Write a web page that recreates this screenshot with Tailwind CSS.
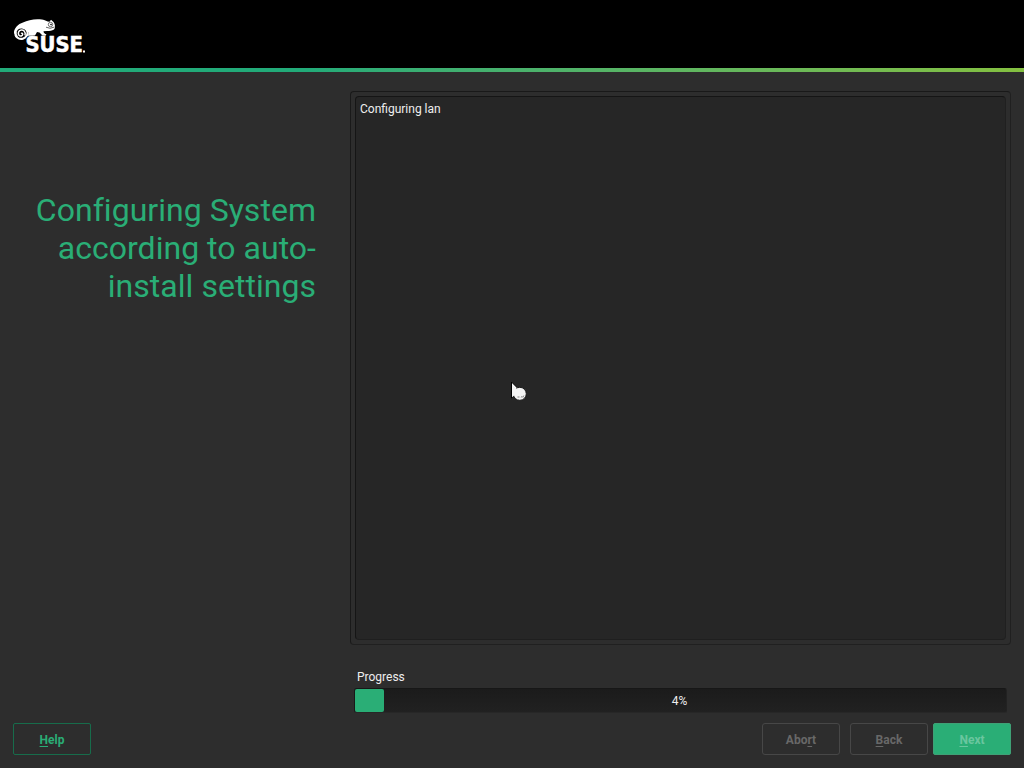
<!DOCTYPE html>
<html lang="en">
<head>
<meta charset="utf-8">
<title>SUSE Installer</title>
<script src="https://cdn.jsdelivr.net/npm/@tailwindcss/browser@4"></script>
</head>
<body class="w-[1024px] h-[768px] overflow-hidden bg-[#2d2d2d] font-[Roboto,sans-serif] text-xs text-[#eeeeee] flex flex-col">
<header class="h-[68px] shrink-0 bg-black">
  <svg class="block" width="100" height="68" viewBox="0 0 100 68">
    <path fill="#fff" d="M14 33C14 28 18 24 23 22.500C28 20 35 18.500 42 19.500C45 20 47 21.700 49.500 21.700L51 19.800L53.500 22C55 24 55.700 28 54 29.500C52 31 49.500 31 47 31L43.500 31.300C43.500 33 45 34 46.500 34.300L45.500 35.700L42.500 35.500L39.500 32.500L37 32L35 35.500L28 35.800L28.500 32Z"/>
    <path d="M15.200 34C15.200 29.500 18 27.200 22 27.400C26.500 27.700 28.700 31.700 27.200 35C25.500 38.800 20.500 40.300 17.300 37.500C15.600 36 15 34 15.800 31.500" fill="#000" stroke="#fff" stroke-width="2.200"/>
    <path d="M25 35.500C26 31.500 23.500 29.700 21.200 30C18.500 30.400 17.600 33.300 19 35.200C20.300 36.800 22.700 36 22.700 34.300C22.700 33.300 21.700 32.900 21 33.500" fill="none" stroke="#fff" stroke-width="1.500"/>
    <circle cx="50.500" cy="24.500" r="2.200" fill="#fff" stroke="#333" stroke-width=".7"/>
    <circle cx="51" cy="24.500" r=".8" fill="#000"/>
    <path d="M46 27.200Q50 29.500 54.500 27" fill="none" stroke="#222" stroke-width=".7"/>
    <path d="M26 38.500L28 36.700H34" fill="none" stroke="#000" stroke-width="1"/>
    <text x="25.500" y="52.400" font-family="DejaVu Sans, sans-serif" font-weight="700" font-size="20.700" textLength="57.500" lengthAdjust="spacingAndGlyphs" fill="#fff" stroke="#fff" stroke-width=".6">SUSE</text>
    <rect x="83" y="50.500" width="2" height="2" fill="#fff"/>
  </svg>
</header>
<div class="h-1 shrink-0 bg-linear-to-r from-[#22ab79] from-30% to-[#84c040]"></div>
<main class="flex h-[648px] shrink-0">
  <section class="w-[350px] pt-[119px] pr-[34px]">
    <h1 class="text-right text-[32px] leading-[38px] tracking-[0.03px] text-[#2aae76]">Configuring System<br>according to auto-<br>install settings</h1>
  </section>
  <section class="w-[661px] pt-[19px]">
    <div class="h-[554px] rounded border border-[#191919] border-r-[#202020] border-b-[#202020] p-1">
      <div class="h-full rounded border border-[#151515] border-r-[#202020] border-b-[#1f1f1f] bg-[#262626] pl-1 pt-1 leading-4">Configuring lan</div>
    </div>
    <div class="mt-[24px] pl-[7px] leading-4 h-[19px]">Progress</div>
    <div class="relative ml-1 mr-1 h-[25px] rounded-[3px] border border-t-[#171717] border-l-[#191919] border-r-[#222222] border-b-[#272727] bg-linear-to-b from-[#1b1b1b] to-[#212121] flex">
      <div class="h-[23px] rounded-[2px] bg-[#2aae76]" style="width:29px"></div>
      <span class="absolute inset-0 pr-[2px] text-center leading-6">4%</span>
    </div>
  </section>
</main>
<footer class="flex flex-1 px-[13px] pt-[3px] font-bold">
  <button class="h-8 w-[78px] rounded-[2px] border border-[#176c4b] pt-[2px] text-[#2aae76]"><span class="underline underline-offset-2">H</span>elp</button>
  <button class="ml-auto h-8 w-[78px] rounded-[3px] border border-[#474747] pt-[2px] text-[#686868]">Abo<span class="underline underline-offset-2">r</span>t</button>
  <button class="ml-[10px] h-8 w-[78px] rounded-[3px] border border-[#474747] pt-[2px] text-[#686868]"><span class="underline underline-offset-2">B</span>ack</button>
  <button class="ml-[5px] h-8 w-[78px] rounded-[2px] border border-[#3fa176] bg-[#2aae76] pt-[2px] text-[#6ac69f]"><span class="underline underline-offset-2">N</span>ext</button>
</footer>
<svg class="absolute left-[510px] top-[380px]" width="18" height="24" viewBox="0 0 18 24">
  <path d="M1.500 2L12 12.500H7.500L1.500 18Z" fill="#fff" stroke="#000"/>
  <circle cx="9.800" cy="13.800" r="6.500" fill="#f4f4f4" stroke="#181818"/>
  <path d="M2 4L9 11L5 15L2 17Z" fill="#f4f4f4"/>
  <path d="M7.500 17h2M11.200 17.500l1 -1.500M12.800 17.500l1 -2" stroke="#777" stroke-width=".9"/>
</svg>
</body>
</html>
